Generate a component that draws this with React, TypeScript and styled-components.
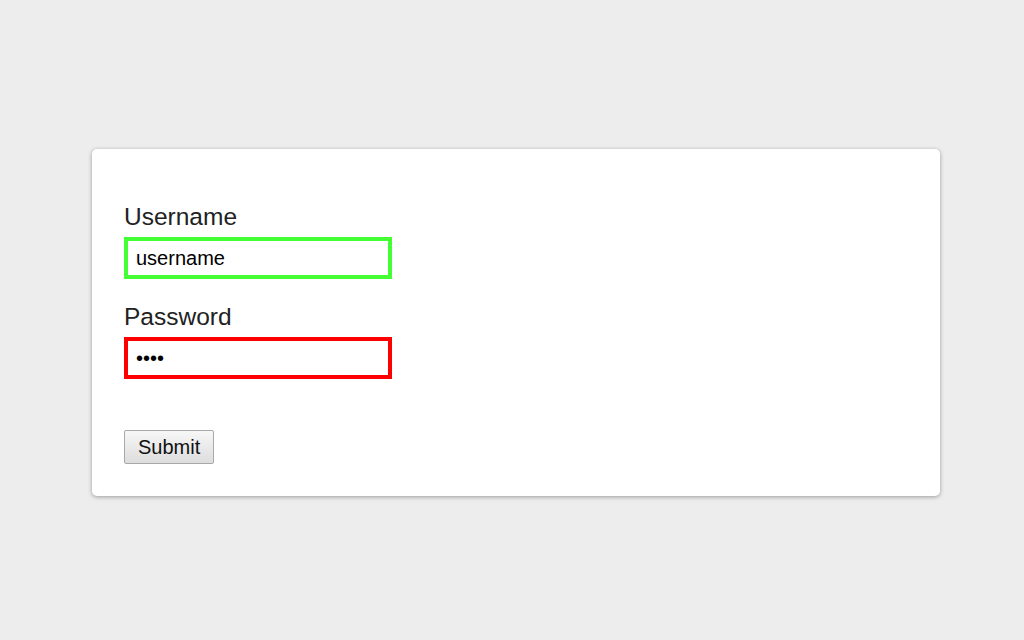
import React from "react";
import styled, { createGlobalStyle } from "styled-components";

const GlobalStyle = createGlobalStyle`
  html, body {
    margin: 0;
    padding: 0;
    background: #ededed;
    font-family: "Liberation Sans", Arial, sans-serif;
  }
  * { box-sizing: border-box; }
`;

const Page = styled.div`
  width: 1024px;
  height: 640px;
  padding: 149px 0 0 92px;
  background: #ededed;
`;

const Card = styled.form`
  width: 848px;
  height: 347px;
  background: #ffffff;
  border-radius: 5px;
  box-shadow: 0 1px 4px rgba(0, 0, 0, 0.35);
  padding: 54px 32px 0 32px;
  display: flex;
  flex-direction: column;
  align-items: flex-start;
`;

const Field = styled.div`
  display: flex;
  flex-direction: column;
  align-items: flex-start;
  gap: 7px;
  margin-bottom: 24px;
`;

const Label = styled.label`
  font-size: 24.5px;
  line-height: 27px;
  color: #222222;
`;

const Input = styled.input<{ $state: "valid" | "invalid" }>`
  width: 268px;
  height: 42px;
  padding: 0 8px;
  border: 4px solid ${(p) => (p.$state === "valid" ? "#44ff33" : "#ff0000")};
  border-radius: 0;
  outline: none;
  background: #ffffff;
  font-family: "Liberation Sans", Arial, sans-serif;
  font-size: 20px;
  color: #000000;
`;

const Button = styled.button`
  margin-top: 27px;
  height: 34px;
  padding: 0 13px;
  border: 1px solid #a9a9a9;
  border-radius: 2px;
  background: linear-gradient(#f7f7f7, #dddddd);
  font-family: "Liberation Sans", Arial, sans-serif;
  font-size: 20px;
  color: #111111;
  cursor: pointer;
`;

export default function App() {
  return (
    <>
      <GlobalStyle />
      <Page>
        <Card onSubmit={(e) => e.preventDefault()}>
          <Field>
            <Label htmlFor="username">Username</Label>
            <Input
              id="username"
              type="text"
              defaultValue="username"
              $state="valid"
              autoFocus
            />
          </Field>
          <Field>
            <Label htmlFor="password">Password</Label>
            <Input id="password" type="password" defaultValue="1234" $state="invalid" />
          </Field>
          <Button type="submit">Submit</Button>
        </Card>
      </Page>
    </>
  );
}
